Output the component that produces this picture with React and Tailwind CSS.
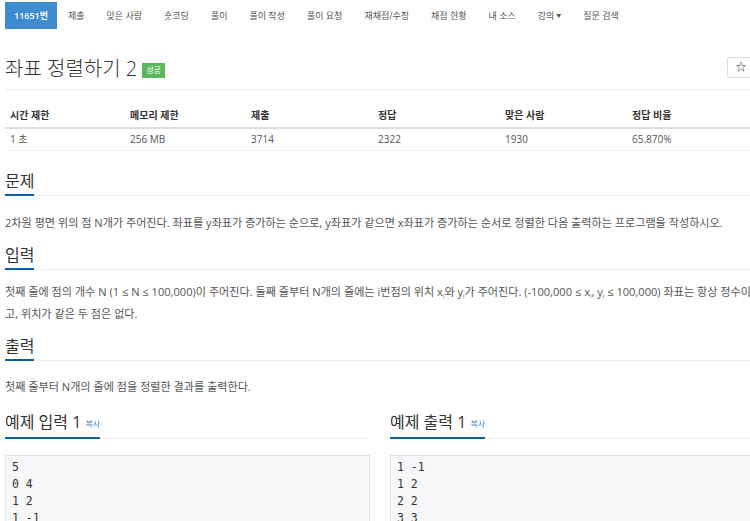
import React from 'react';

const tabs = ['제출', '맞은 사람', '숏코딩', '풀이', '풀이 작성', '풀이 요청', '재채점/수정', '채점 현황', '내 소스', '강의', '질문 검색'];

const stats = [
  { label: '시간 제한', value: '1 초', w: 'w-[120px]' },
  { label: '메모리 제한', value: '256 MB', w: 'w-[121px]' },
  { label: '제출', value: '3714', w: 'w-[127px]' },
  { label: '정답', value: '2322', w: 'w-[127px]' },
  { label: '맞은 사람', value: '1930', w: 'w-[127px]' },
  { label: '정답 비율', value: '65.870%', w: 'w-[128px]' },
];

function Heading({ children, className = '' }) {
  return (
    <div className={'flex items-end border-b border-[#eeeeee] ' + className}>
      <div className="border-b-2 border-[#0b5fa5] -mb-px pb-[3px] text-[16px] leading-[20px] text-[#333]">
        {children}
      </div>
    </div>
  );
}

function Sample({ title, lines }) {
  return (
    <div className="w-[365px] shrink-0">
      <Heading>
        {title} <span className="text-[8px] text-[#428bca] align-middle">복사</span>
      </Heading>
      <pre className="mt-[16px] bg-[#f7f7f9] border border-[#e1e1e8] px-[6px] pt-[3px] pb-[6px] text-[11.5px] leading-[17px] text-[#333] [font-family:'DejaVu_Sans_Mono',monospace] h-[90px]">
        {lines.join('\n')}
      </pre>
    </div>
  );
}

function Sub({ children }) {
  return <sub className="text-[6px] leading-none">{children}</sub>;
}

export default function App() {
  return (
    <div className="w-[750px] h-[521px] overflow-hidden bg-white font-['Open_Sans','Noto_Sans_CJK_KR',sans-serif] text-[#555]">
      <div className="w-[760px] pl-[5px]">
        <ul className="flex items-center mt-[2px] h-[27px] text-[9px]">
          <li className="h-full px-[9px] flex items-center bg-[#3f8bd0] text-white font-semibold">11651번</li>
          {tabs.map((t) => (
            <li key={t} className="h-full px-[11px] flex items-center text-[#555]">
              {t}
              {t === '강의' && <span className="ml-[2px] text-[5px]">▼</span>}
            </li>
          ))}
        </ul>

        <div className="w-[750px]">
          <div className="flex items-center justify-between mt-[27px] h-[25px]">
            <div className="flex items-center">
              <span className="text-[20px] leading-[25px] text-[#333] font-light">좌표 정렬하기 2</span>
              <span className="ml-[5px] mt-[3px] bg-[#5cb85c] text-white text-[8px] px-[4px] h-[15px] flex items-center">성공</span>
            </div>
            <button className="w-[28px] h-[21px] mt-[-3px] border border-[#ddd] rounded-[2px] text-[11px] text-[#333] flex items-center justify-center">☆</button>
          </div>
          <div className="mt-[8px] border-b border-[#eee]" />

          <div className="mt-[14px] text-[10px]">
            <div className="flex border-b-2 border-[#ddd] h-[25px] items-center font-semibold text-[#333]">
              {stats.map((s) => (
                <div key={s.label} className={s.w + ' px-[5px]'}>{s.label}</div>
              ))}
            </div>
            <div className="flex h-[22px] items-center border-b border-[#f2f2f2]">
              {stats.map((s) => (
                <div key={s.label} className={s.w + ' px-[5px]'}>{s.value}</div>
              ))}
            </div>
          </div>

          <Heading className="mt-[20px]">문제</Heading>
          <p className="mt-[16px] text-[11.1px] leading-[22px]">
            2차원 평면 위의 점 N개가 주어진다. 좌표를 y좌표가 증가하는 순으로, y좌표가 같으면 x좌표가 증가하는 순서로 정렬한 다음 출력하는 프로그램을 작성하시오.
          </p>

          <Heading className="mt-[11px]">입력</Heading>
          <p className="mt-[11px] text-[11.1px] leading-[22px]">
            첫째 줄에 점의 개수 N (1 ≤ N ≤ 100,000)이 주어진다. 둘째 줄부터 N개의 줄에는 i번점의 위치 x<Sub>i</Sub>와 y<Sub>i</Sub>가 주어진다. (-100,000 ≤ x<Sub>i</Sub>, y<Sub>i</Sub> ≤ 100,000) 좌표는 항상 정수이고, 위치가 같은 두 점은 없다.
          </p>

          <Heading className="mt-[11px]">출력</Heading>
          <p className="mt-[15px] text-[11.1px] leading-[22px]">
            첫째 줄부터 N개의 줄에 점을 정렬한 결과를 출력한다.
          </p>

          <div className="flex gap-[20px] mt-[14px]">
            <Sample title="예제 입력 1" lines={['5', '0 4', '1 2', '1 -1', '2 2', '3 3']} />
            <Sample title="예제 출력 1" lines={['1 -1', '1 2', '2 2', '3 3', '0 4']} />
          </div>
        </div>
      </div>
    </div>
  );
}
